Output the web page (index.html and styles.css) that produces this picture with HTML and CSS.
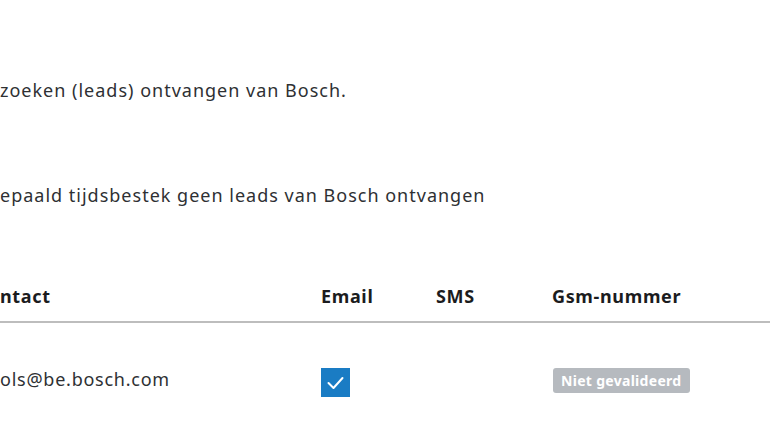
FILE: index.html
```html
<!DOCTYPE html>
<html lang="nl">
<head>
<meta charset="utf-8">
<link rel="stylesheet" href="styles.css">
</head>
<body>
<main class="page">
  <p class="intro">zoeken (leads) ontvangen van Bosch.</p>
  <p class="intro second">epaald tijdsbestek geen leads van Bosch ontvangen</p>
  <div class="table">
    <div class="row head">
      <div class="cell">ntact</div>
      <div class="cell">Email</div>
      <div class="cell">SMS</div>
      <div class="cell">Gsm-nummer</div>
    </div>
    <div class="row body">
      <div class="cell email-addr">ols@be.bosch.com</div>
      <div class="cell">
        <span class="checkbox">
          <svg viewBox="0 0 29 29" width="29" height="29"><path d="M7.5 15 L12.5 20 L21.5 10" fill="none" stroke="#fff" stroke-width="2" stroke-linecap="round" stroke-linejoin="round"/></svg>
        </span>
      </div>
      <div class="cell"></div>
      <div class="cell"><span class="badge">Niet gevalideerd</span></div>
    </div>
  </div>
</main>
</body>
</html>
```

FILE: styles.css
```css
html, body {
  margin: 0;
  padding: 0;
  background: #ffffff;
}
body {
  font-family: "Noto Sans", "Open Sans", sans-serif;
  color: #2e3033;
  overflow: hidden;
}
.page {
  width: 770px;
  height: 434px;
  padding-top: 78px;
  box-sizing: border-box;
}
.intro {
  margin: 0;
  font-size: 18px;
  line-height: 24px;
  letter-spacing: 1px;
}
.intro.second {
  margin-top: 81px;
}
.table {
  margin-top: 77px;
}
.row {
  display: grid;
  grid-template-columns: 321px 115px 116px 1fr;
}
.head {
  font-weight: 700;
  color: #1b1c1e;
  font-size: 18px;
  line-height: 24px;
  letter-spacing: 0.65px;
  padding-bottom: 13px;
  border-bottom: 2px solid #bdbdbd;
}
.body {
  padding-top: 45px;
  align-items: start;
}
.email-addr {
  font-size: 18px;
  line-height: 24px;
  letter-spacing: 0.75px;
  margin-top: -1px;
}
.checkbox {
  display: block;
  width: 29px;
  height: 29px;
  background: #1a7cc4;
}
.checkbox svg {
  display: block;
}
.badge {
  display: inline-block;
  background: #b6babf;
  color: #ffffff;
  font-weight: 700;
  font-size: 14px;
  line-height: 25px;
  letter-spacing: 0.3px;
  padding: 0 8px;
  border-radius: 3px;
  margin-left: 1px;
}
```
